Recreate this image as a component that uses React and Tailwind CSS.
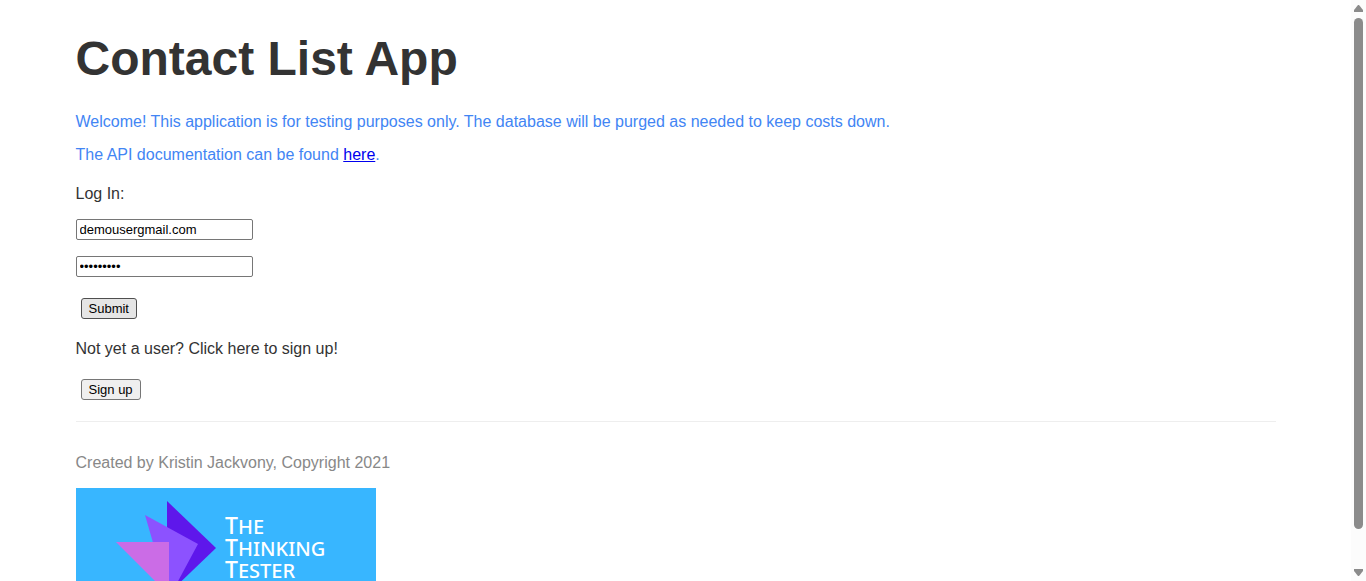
import { useState } from "react";

const fieldClass =
  "block h-[21px] w-[177px] rounded-xs border border-[#767676] bg-white px-[3px] text-[13px] leading-4 text-black";
const buttonClass =
  "mx-[5px] block h-[21px] rounded-[3px] border px-[7px] text-[13px] leading-4 text-black";

function Logo() {
  return (
    <svg
      role="img"
      aria-label="The Thinking Tester"
      className="mt-4 block h-[126px] w-[300px] bg-[#38b6ff]"
      viewBox="0 0 300 126"
    >
      <path d="M91 13L140 60L91 107Z" fill="#5e17eb" />
      <path d="M69 27L122 56L93 110Z" fill="#8c52ff" />
      <path d="M40 54H93V107Z" fill="#cb6ce6" />
      <g fill="#fff" fontFamily="Noto Sans, sans-serif" fontSize="20" fontWeight="500">
        <text x="149" y="46"><tspan fontSize="23">T</tspan>HE</text>
        <text x="149" y="68"><tspan fontSize="23">T</tspan>HINKING</text>
        <text x="149" y="90"><tspan fontSize="23">T</tspan>ESTER</text>
      </g>
    </svg>
  );
}

function ScrollRail() {
  return (
    <div aria-hidden="true" className="flex w-[15px] shrink-0 flex-col items-center bg-[#fcfcfc] py-[5px]">
      <svg className="h-[7px] w-[9px] shrink-0" viewBox="0 0 9 7">
        <path d="M4 0H5L9 5V7H0V5Z" fill="#8b8b8b" />
      </svg>
      <div className="mt-1.5 mb-10 w-[9px] grow rounded-full bg-[#8b8b8b]" />
      <svg className="h-[7px] w-[9px] shrink-0" viewBox="0 0 9 7">
        <path d="M0 0H9V2L5 7H4L0 2Z" fill="#8b8b8b" />
      </svg>
    </div>
  );
}

export default function App() {
  const [email, setEmail] = useState("demousergmail.com");
  const [password, setPassword] = useState("password1");

  return (
    <div className="flex h-screen bg-white font-['Liberation_Sans',Arial,sans-serif] text-base leading-[18px] text-[#333]">
      <div className="min-w-0 grow overflow-y-auto [scrollbar-width:none]">
        <div className="mx-auto max-w-[1200px] pt-[31px]">
          <h1 className="text-5xl leading-14 font-bold">Contact List App</h1>
          <div className="mt-[26px] flex flex-col gap-[15px] text-[#4285f4]">
            <p>
              Welcome! This application is for testing purposes only. The database will be purged as
              needed to keep costs down.
            </p>
            <p>
              The API documentation can be found{" "}
              <a href="#docs" className="text-[#0000ee] underline">here</a>.
            </p>
          </div>
          <form className="mt-[21px]" onSubmit={(e) => e.preventDefault()}>
            <p>Log In:</p>
            <input
              type="text"
              aria-label="Email"
              className={`mt-4 ${fieldClass}`}
              value={email}
              onChange={(e) => setEmail(e.target.value)}
            />
            <input
              type="password"
              aria-label="Password"
              className={`mt-4 ${fieldClass}`}
              value={password}
              onChange={(e) => setPassword(e.target.value)}
            />
            <button type="submit" className={`mt-[21px] border-[#4f4f4f] bg-[#e5e5e5] ${buttonClass}`}>
              Submit
            </button>
          </form>
          <p className="mt-[21px]">Not yet a user? Click here to sign up!</p>
          <button type="button" className={`mt-[21px] border-[#767676] bg-[#efefef] ${buttonClass}`}>
            Sign up
          </button>
          <hr className="mt-[21px] border-[#eee]" />
          <footer className="mt-8 text-[#888]">
            <p>Created by Kristin Jackvony, Copyright 2021</p>
            <Logo />
          </footer>
        </div>
      </div>
      <ScrollRail />
    </div>
  );
}
